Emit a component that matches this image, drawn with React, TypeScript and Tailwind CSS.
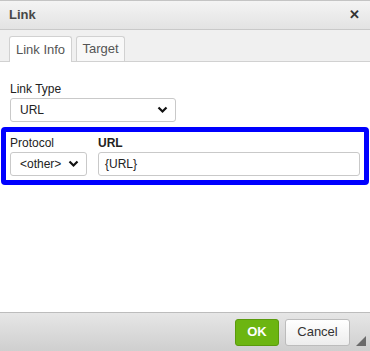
import React from 'react';

const font = { fontFamily: '"Liberation Sans", Arial, sans-serif' };

function Chevron() {
  return (
    <svg width="11" height="8" viewBox="0 0 11 8" className="shrink-0">
      <path d="M1.5 1.5 L5.5 5.5 L9.5 1.5" fill="none" stroke="#111" strokeWidth="2.2" />
    </svg>
  );
}

function Select({ value, width, textClass }: { value: string; width: string; textClass?: string }) {
  return (
    <div className={`flex h-[24px] items-center justify-between rounded-[3px] border border-[#c9c9c9] bg-white pl-[9px] pr-[7px] ${width}`}>
      <span className={`text-[12px] text-[#222] ${textClass ?? ''}`}>{value}</span>
      <Chevron />
    </div>
  );
}

export default function App() {
  return (
    <div className="flex h-[351px] w-[370px] flex-col overflow-hidden border-t border-[#c4c4c4] bg-white text-[#484848]" style={font}>
      {/* title */}
      <div className="flex h-[29px] items-center justify-between border-b border-[#c9c9c9] bg-gradient-to-b from-[#f4f4f4] to-[#e3e3e3] pl-[9px] pr-[10px]">
        <span className="text-[13px] font-bold text-[#474747]">Link</span>
        <span className="text-[13px] font-bold text-[#333]">✕</span>
      </div>

      {/* tabs */}
      <div className="flex h-[32px] items-end gap-[4px] border-b border-[#d1d1d1] bg-[#f0f0f0] pl-[9px]">
        <div className="-mb-px flex h-[26px] w-[63px] items-center justify-center rounded-t-[3px] border border-b-0 border-[#d1d1d1] bg-white text-[13px] text-[#555]">
          Link Info
        </div>
        <div className="flex h-[25px] w-[49px] items-center justify-center rounded-t-[3px] border border-b-0 border-[#d1d1d1] bg-[#f8f8f8] text-[13px] text-[#555]">
          Target
        </div>
      </div>

      {/* body */}
      <div className="flex-1 bg-white pt-[20px]">
        <div className="px-[10px]">
          <div className="text-[12px] leading-[14px] text-[#222]">Link Type</div>
          <div className="mt-[2px]">
            <Select value="URL" width="w-[166px]" />
          </div>
        </div>

        <div className="mx-[1px] mt-[5px] flex gap-[11px] rounded-[4px] border-[5px] border-[#0000ff] px-[4px] pb-[4px] pt-[4px]">
          <div>
            <div className="text-[12px] leading-[14px] text-[#222]">Protocol</div>
            <div className="mt-[2px]">
              <Select value="<other>" width="w-[77px]" textClass="text-[11px]" />
            </div>
          </div>
          <div className="flex-1">
            <div className="text-[12px] font-bold leading-[14px] text-[#222]">URL</div>
            <div className="mt-[2px] flex h-[24px] items-center rounded-[3px] border border-[#c9c9c9] bg-white pl-[6px] text-[12px] text-[#222]">
              {'{URL}'}
            </div>
          </div>
        </div>
      </div>

      {/* footer */}
      <div className="relative flex h-[39px] items-center justify-end gap-[6px] border-t border-[#bcbcbc] bg-gradient-to-b from-[#e6e6e6] to-[#cfcfcf] pr-[20px]">
        <button className="h-[27px] w-[44px] rounded-[3px] border border-[#5a9a0c] bg-[#6cb511] text-[13px] font-bold text-white">
          OK
        </button>
        <button className="h-[27px] w-[65px] rounded-[3px] border border-[#bcbcbc] bg-gradient-to-b from-white to-[#ededed] text-[13px] text-[#333]">
          Cancel
        </button>
        <svg width="10" height="10" viewBox="0 0 10 10" className="absolute bottom-[5px] right-[4px]">
          <path d="M10 0 L10 10 L0 10 Z" fill="#6b6b6b" />
        </svg>
      </div>
    </div>
  );
}
